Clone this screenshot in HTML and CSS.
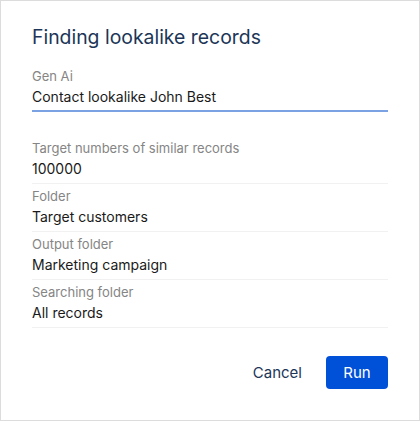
FILE: index.html
```html
<!DOCTYPE html>
<html>
<head>
<meta charset="utf-8">
<link rel="stylesheet" href="styles.css">
</head>
<body>
<div class="dialog">
  <h1 class="title">Finding lookalike records</h1>
  <div class="field field-active">
    <div class="label">Gen Ai</div>
    <div class="value">Contact lookalike John Best</div>
  </div>
  <div class="list">
    <div class="field">
      <div class="label">Target numbers of similar records</div>
      <div class="value">100000</div>
    </div>
    <div class="field">
      <div class="label">Folder</div>
      <div class="value">Target customers</div>
    </div>
    <div class="field">
      <div class="label">Output folder</div>
      <div class="value">Marketing campaign</div>
    </div>
    <div class="field">
      <div class="label">Searching folder</div>
      <div class="value">All records</div>
    </div>
  </div>
  <div class="actions">
    <button class="btn btn-cancel">Cancel</button>
    <button class="btn btn-run">Run</button>
  </div>
</div>
</body>
</html>
```
FILE: styles.css
```css
html, body {
  margin: 0;
  padding: 0;
  background: #ffffff;
}
.dialog {
  box-sizing: border-box;
  width: 420px;
  height: 421px;
  border: 1px solid #dcdcdc;
  padding: 24px 31px 0 31px;
  font-family: Inter, "Noto Sans", sans-serif;
  display: flex;
  flex-direction: column;
}
.title {
  margin: 0;
  font-size: 19.4px;
  line-height: 24px;
  font-weight: 400;
  color: #1c3658;
}
.field {
  display: flex;
  flex-direction: column;
}
.label {
  font-size: 13px;
  line-height: 16px;
  color: #858585;
}
.value {
  font-size: 14px;
  line-height: 20px;
  color: #1a1a1a;
  margin-top: 3px;
}
.field-active {
  margin-top: 19px;
  padding-bottom: 3px;
  border-bottom: 2px solid #7ba3e4;
}
.list {
  margin-top: 28px;
  display: flex;
  flex-direction: column;
  gap: 4px;
}
.list .field {
  padding-bottom: 4px;
  border-bottom: 1px solid #f1f1f1;
}
.actions {
  margin-top: 28px;
  display: flex;
  justify-content: flex-end;
  align-items: center;
  gap: 14px;
}
.btn {
  font-family: inherit;
  font-size: 15px;
  border: none;
  border-radius: 4px;
  height: 33px;
  cursor: pointer;
}
.btn-cancel {
  background: transparent;
  color: #1c3658;
  padding: 0 10px;
}
.btn-run {
  background: #0050d8;
  color: #ffffff;
  width: 62px;
}
```
